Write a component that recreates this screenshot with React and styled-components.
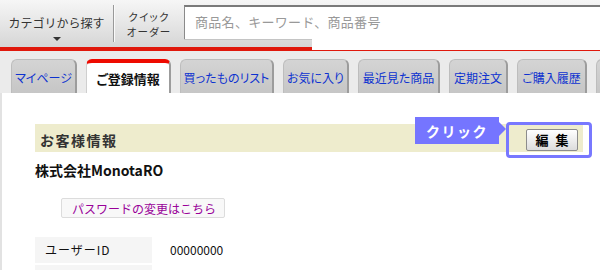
import React from "react";
import styled, { createGlobalStyle } from "styled-components";

const tabs = [
  { label: "マイページ", w: 66 },
  { label: "ご登録情報", w: 85, active: true },
  { label: "買ったものリスト", w: 94 },
  { label: "お気に入り", w: 66 },
  { label: "最近見た商品", w: 82 },
  { label: "定期注文", w: 59 },
  { label: "ご購入履歴", w: 70 },
  { label: "", w: 60 },
];

const App = () => {
  return (
    <Page>
      <GlobalStyle />
      <Header>
        <TopRow>
          <LeftNav>
            <CategoryBtn>
              <span>カテゴリから探す</span>
              <Caret />
            </CategoryBtn>
            <Divider />
            <QuickBtn>
              <QuickLine>クイック</QuickLine>
              <QuickLine>オーダー</QuickLine>
            </QuickBtn>
          </LeftNav>
          <SearchArea>
            <SearchBox>商品名、キーワード、商品番号</SearchBox>
            <Strip>
              <GrayPiece />
              <WhitePiece />
            </Strip>
          </SearchArea>
        </TopRow>
        <UnderRow>
          <RedThick />
          <ThinLine />
        </UnderRow>
      </Header>

      <TabBar>
        {tabs.map((t, i) => (
          <Tab key={i} $w={t.w} $active={t.active}>
            {t.label}
          </Tab>
        ))}
      </TabBar>

      <Content>
        <SectionHeader>
          <SectionTitle>お客様情報</SectionTitle>
          <EditButton>編 集</EditButton>
          <Callout>クリック</Callout>
          <Highlight />
        </SectionHeader>
        <CompanyName>株式会社MonotaRO</CompanyName>
        <PasswordButton>パスワードの変更はこちら</PasswordButton>
        <InfoTable>
          <InfoRow>
            <LabelCell>ユーザーID</LabelCell>
            <ValueCell>00000000</ValueCell>
          </InfoRow>
          <InfoRow>
            <LabelCell />
            <ValueCell />
          </InfoRow>
        </InfoTable>
      </Content>
    </Page>
  );
};

const GlobalStyle = createGlobalStyle`
  body {
    margin: 0;
    background: #fff;
    font-family: "Noto Sans CJK JP", "Noto Sans", sans-serif;
  }
  * { box-sizing: border-box; }
`;

const Page = styled.div`
  width: 600px;
  height: 270px;
  overflow: hidden;
`;

const Header = styled.div`
  display: flex;
  flex-direction: column;
`;

const TopRow = styled.div`
  display: flex;
  height: 47px;
  background: linear-gradient(#f6f6f6, #d6d6d6);
`;

const LeftNav = styled.div`
  display: flex;
  width: 184px;
`;

const CategoryBtn = styled.div`
  width: 113px;
  display: flex;
  flex-direction: column;
  align-items: center;
  padding-top: 14px;
  font-size: 12px;
  color: #333;
  line-height: 18px;
`;

const Caret = styled.div`
  margin-top: 5px;
  width: 0;
  height: 0;
  border-left: 4px solid transparent;
  border-right: 4px solid transparent;
  border-top: 4px solid #333;
`;

const Divider = styled.div`
  width: 1px;
  margin: 5px 0 5px;
  background: #999;
  box-shadow: 1px 0 0 #fafafa;
`;

const QuickBtn = styled.div`
  flex: 1;
  display: flex;
  flex-direction: column;
  align-items: center;
  justify-content: center;
  padding-top: 1px;
`;

const QuickLine = styled.span`
  display: block;
  height: 15.5px;
  font-size: 10.5px;
  line-height: 15.5px;
  color: #333;
  font-feature-settings: "palt";
  letter-spacing: 1.2px;
`;

const SearchArea = styled.div`
  flex: 1;
  display: flex;
  flex-direction: column;
  padding-top: 5px;
`;

const SearchBox = styled.div`
  height: 34px;
  background: #fff;
  border-top: 2px solid #7a7a7a;
  border-left: 1px solid #8a8a8a;
  padding: 0 0 4px 10px;
  display: flex;
  align-items: center;
  font-size: 13px;
  letter-spacing: 0.3px;
  color: #999;
`;

const Strip = styled.div`
  flex: 1;
  display: flex;
`;

const GrayPiece = styled.div`
  width: 128px;
  border-top: 1px solid #c4c4c4;
`;

const WhitePiece = styled.div`
  flex: 1;
  background: #fff;
`;

const UnderRow = styled.div`
  display: flex;
  height: 4px;
`;

const RedThick = styled.div`
  width: 312px;
  background: #e0180c;
`;

const ThinLine = styled.div`
  flex: 1;
  background: #fff;
  border-bottom: 1px solid #e0180c;
`;

const TabBar = styled.div`
  height: 42px;
  display: flex;
  align-items: flex-end;
  gap: 9px;
  padding-left: 11px;
  background: #ebebeb;
  overflow: hidden;
`;

const Tab = styled.div`
  flex: none;
  width: ${(p) => p.$w}px;
  height: ${(p) => (p.$active ? 35 : 34)}px;
  margin-bottom: ${(p) => (p.$active ? -1 : 0)}px;
  border-radius: 6px 6px 0 0;
  display: flex;
  align-items: center;
  justify-content: center;
  font-size: ${(p) => (p.$active ? 13 : 12)}px;
  font-weight: ${(p) => (p.$active ? 700 : 400)};
  color: ${(p) => (p.$active ? "#111" : "#0d32d0")};
  font-feature-settings: "palt";
  white-space: nowrap;
  background: ${(p) => (p.$active ? "#fff" : "linear-gradient(#d4d4d4, #c6c6c6)")};
  border: 1px solid ${(p) => (p.$active ? "#cfcfcf" : "#bdbdbd")};
  border-top: ${(p) => (p.$active ? "4px solid #ee0a00" : "1px solid #bdbdbd")};
  border-right: 2px solid #9c9c9c;
  border-bottom: none;
  padding-top: ${(p) => (p.$active ? 0 : 2)}px;
`;

const Content = styled.div`
  border-left: 2px solid #e2e2e2;
  padding: 31px 17px 0 33px;
  min-height: 177px;
`;

const SectionHeader = styled.div`
  position: relative;
  height: 28px;
  background: #eeeccd;
  display: flex;
  align-items: center;
  justify-content: space-between;
  padding: 3px 5px 0 5px;
`;

const SectionTitle = styled.div`
  font-size: 14px;
  font-weight: 700;
  color: #333;
  letter-spacing: 1.5px;
`;

const EditButton = styled.div`
  width: 52px;
  height: 22px;
  border: 1px solid #8c8c8c;
  border-radius: 2px;
  background: linear-gradient(#ffffff, #dcdcdc);
  display: flex;
  align-items: center;
  justify-content: center;
  font-size: 13px;
  font-weight: 700;
  color: #000;
  white-space: pre;
  letter-spacing: 2px;
  padding-left: 2px;
`;

const Callout = styled.div`
  position: absolute;
  left: 380px;
  top: -7px;
  width: 84px;
  height: 27px;
  background: #7575ff;
  color: #fff;
  font-size: 14px;
  font-weight: 700;
  letter-spacing: 1.5px;
  display: flex;
  align-items: center;
  padding-left: 11px;

  &::after {
    content: "";
    position: absolute;
    right: -7px;
    top: 5px;
    border-top: 7px solid transparent;
    border-bottom: 7px solid transparent;
    border-left: 7px solid #7575ff;
  }
`;

const Highlight = styled.div`
  position: absolute;
  right: -9px;
  top: -2px;
  width: 86px;
  height: 36px;
  border: 3px solid #7878ff;
  border-radius: 4px;
`;

const CompanyName = styled.div`
  margin-top: 8px;
  line-height: 20px;
  font-size: 14px;
  font-weight: 700;
  color: #111;
`;

const PasswordButton = styled.div`
  display: inline-flex;
  align-items: center;
  height: 20px;
  margin: 18px 0 0 26px;
  padding: 0 8px 0 10px;
  background: #f8f8f8;
  border: 1px solid #dcdcdc;
  border-radius: 2px;
  font-size: 12px;
  color: #990099;
`;

const InfoTable = styled.div`
  margin-top: 18px;
  display: flex;
  flex-direction: column;
  gap: 2px;
`;

const InfoRow = styled.div`
  display: flex;
  height: 26px;
`;

const LabelCell = styled.div`
  width: 117px;
  background: #f5f5f5;
  display: flex;
  align-items: center;
  padding-left: 10px;
  font-size: 12px;
  color: #111;
  letter-spacing: 1px;
`;

const ValueCell = styled.div`
  display: flex;
  align-items: center;
  padding-left: 18px;
  font-size: 12px;
  color: #111;
`;

export default App;
